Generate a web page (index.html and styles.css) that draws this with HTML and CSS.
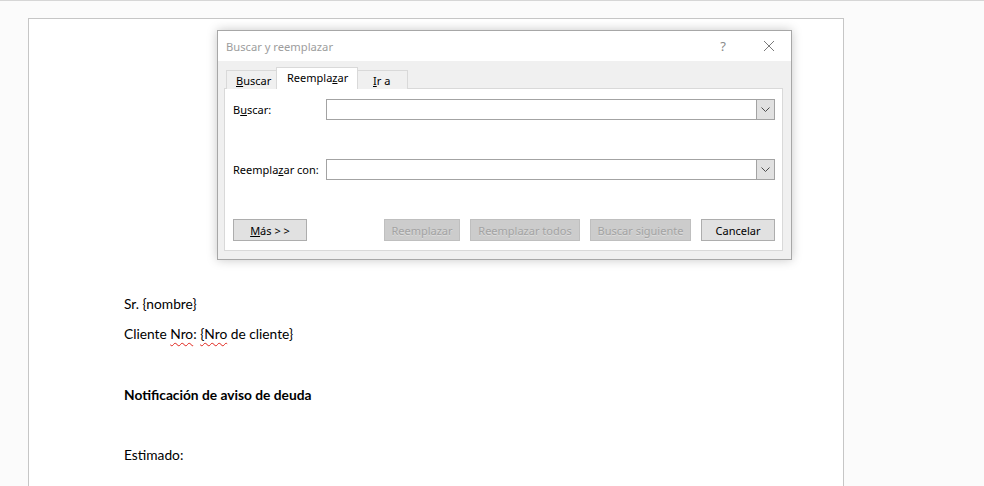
FILE: index.html
```html
<!DOCTYPE html>
<html lang="es">
<head>
<meta charset="utf-8">
<title>Buscar y reemplazar</title>
<link rel="stylesheet" href="styles.css">
</head>
<body>
<div class="workspace">
  <div class="page">
    <p class="para">Sr. {nombre}</p>
    <p class="para">Cliente <span class="spell">Nro</span>: <span class="spell">{Nro</span> de cliente}</p>
    <p class="para"></p>
    <p class="para bold">Notificación de aviso de deuda</p>
    <p class="para"></p>
    <p class="para">Estimado:</p>
  </div>
</div>

<div class="dialog">
  <div class="titlebar">
    <span class="title">Buscar y reemplazar</span>
    <span class="help">?</span>
    <svg class="close" width="12" height="12" viewBox="0 0 12 12"><path d="M1 1 L11 11 M11 1 L1 11" stroke="#7a7a7a" stroke-width="1" fill="none"/></svg>
  </div>
  <div class="body">
    <div class="tabs">
      <div class="tab"><u>B</u>uscar</div>
      <div class="tab active">Reempla<u>z</u>ar</div>
      <div class="tab"><u>I</u>r a</div>
    </div>
    <div class="panel">
      <div class="row">
        <label class="label">B<u>u</u>scar:</label>
        <div class="combo"><div class="combo-input"></div><div class="combo-btn"><svg width="9" height="5" viewBox="0 0 9 5"><path d="M0.5 0.5 L4.5 4.5 L8.5 0.5" stroke="#4d4d4d" stroke-width="1" fill="none"/></svg></div></div>
      </div>
      <div class="row">
        <label class="label">Reempla<u>z</u>ar con:</label>
        <div class="combo"><div class="combo-input"></div><div class="combo-btn"><svg width="9" height="5" viewBox="0 0 9 5"><path d="M0.5 0.5 L4.5 4.5 L8.5 0.5" stroke="#4d4d4d" stroke-width="1" fill="none"/></svg></div></div>
      </div>
      <div class="buttons">
        <button class="btn more"><u>M</u>ás &gt; &gt;</button>
        <div class="spacer"></div>
        <button class="btn disabled w76">Reemplazar</button>
        <button class="btn disabled w110">Reemplazar todos</button>
        <button class="btn disabled w101">Buscar siguiente</button>
        <button class="btn w74">Cancelar</button>
      </div>
    </div>
  </div>
</div>
</body>
</html>
```

FILE: styles.css
```css
html, body {
  margin: 0;
  padding: 0;
}
body {
  width: 984px;
  height: 486px;
  overflow: hidden;
  background: #fbfbfb;
  border-top: 1px solid #d6d6d6;
  box-sizing: border-box;
  position: relative;
}
.workspace {
  padding: 17px 0 0 28px;
}
.page {
  width: 816px;
  height: 469px;
  box-sizing: border-box;
  background: #ffffff;
  border: 1px solid #c6c6c6;
  border-bottom: none;
  padding: 270px 0 0 95px;
  font-family: "Lato", "Liberation Sans", sans-serif;
  font-size: 13.75px;
  color: #000;
}
.para {
  margin: 0;
  height: 30.3px;
  line-height: 30px;
  white-space: nowrap;
}
.bold {
  font-weight: bold;
}
.spell {
  text-decoration: underline wavy #e0241b;
  text-decoration-thickness: 1px;
  text-underline-offset: 3px;
}

/* dialog */
.dialog {
  position: absolute;
  left: 217px;
  top: 29px;
  width: 575px;
  height: 230px;
  box-sizing: border-box;
  border: 1px solid #a7a7a7;
  background: #f0f0f0;
  box-shadow: 0 0 10px rgba(0,0,0,0.22);
  font-family: "Noto Sans", "Open Sans", sans-serif;
  font-size: 11px;
  color: #000;
  display: flex;
  flex-direction: column;
}
.titlebar {
  height: 30px;
  background: #ffffff;
  display: flex;
  align-items: center;
  padding: 0 16px 0 8px;
  flex-shrink: 0;
}
.title {
  flex: 1;
  color: #9d9d9d;
  font-size: 11.2px;
}
.help {
  color: #8a8a8a;
  font-size: 13px;
  margin-right: 37px;
}
.close {
  display: block;
}
.body {
  flex: 1;
  padding: 7px 8px 8px 6px;
  display: flex;
  flex-direction: column;
}
.tabs {
  display: flex;
  align-items: flex-end;
  height: 21px;
  padding-left: 2px;
  position: relative;
  z-index: 1;
  margin-bottom: -1px;
}
.tab {
  height: 19px;
  box-sizing: border-box;
  border: 1px solid #d9d9d9;
  border-bottom: none;
  background: #f0f0f0;
  padding: 0 0 0 9px;
  line-height: 20px;
  margin-right: -1px;
}
.tab:first-child {
  width: 51px;
}
.tab:last-child {
  width: 51px;
  padding-left: 15px;
}
.tab.active {
  height: 22px;
  width: 82px;
  background: #ffffff;
  padding: 0 0 0 10px;
  line-height: 20px;
  border-color: #d9d9d9;
}
.panel {
  flex: 1;
  background: #ffffff;
  border: 1px solid #d9d9d9;
  padding: 10px 7px 8px 8px;
  display: flex;
  flex-direction: column;
}
.row {
  display: flex;
  align-items: center;
  height: 21px;
  margin-bottom: 39px;
}
.label {
  width: 93px;
  flex-shrink: 0;
  white-space: nowrap;
}
.combo {
  flex: 1;
  height: 21px;
  display: flex;
  box-sizing: border-box;
  border: 1px solid #a3a3a3;
  background: #fff;
}
.combo-input {
  flex: 1;
}
.combo-btn {
  width: 17px;
  background: #e1e1e1;
  border-left: 1px solid #a3a3a3;
  display: flex;
  align-items: center;
  justify-content: center;
}
.buttons {
  display: flex;
  height: 22px;
}
.spacer {
  flex: 1;
}
.btn {
  font: inherit;
  height: 22px;
  padding: 0;
  margin: 0 0 0 10px;
  box-sizing: border-box;
  border: 1px solid #adadad;
  background: #e1e1e1;
  color: #000;
  white-space: nowrap;
}
.btn.more {
  width: 74px;
  margin-left: 0;
}
.btn.disabled {
  background: #cccccc;
  border-color: #bfbfbf;
  color: #a3a3a3;
  text-shadow: 0 1px 0 rgba(255,255,255,0.35);
}
.w76 { width: 76px; }
.w110 { width: 110px; }
.w101 { width: 101px; }
.w74 { width: 74px; }
```
